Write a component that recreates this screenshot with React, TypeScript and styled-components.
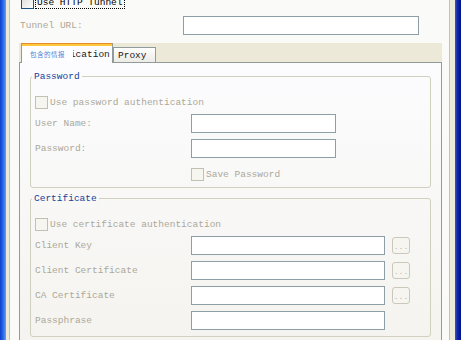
import React from 'react';
import styled, {createGlobalStyle} from 'styled-components';

const GlobalStyle = createGlobalStyle`
    html, body {
        margin: 0;
        padding: 0;
        background: #ECE9D8;
    }
    body {
        font-family: "Liberation Mono", "Noto Sans CJK SC", monospace;
        font-size: 9.5px;
        color: #000;
    }
`

const Window = styled.div`
    width: 461px;
    height: 340px;
    display: flex;
    overflow: hidden;
    background: #ECE9D8;
`

const FrameSide = styled.div<{ $side: 'left' | 'right' }>`
    flex: none;
    width: 6px;
    background: ${p => p.$side === 'left'
        ? 'linear-gradient(to right, #0B3CCB, #2C6DE8 55%, #6A9BEF)'
        : 'linear-gradient(to right, #3A52C8, #0D23A6 45%, #00128E)'};
`

const Client = styled.div`
    flex: 1;
    min-width: 0;
    display: flex;
    padding: 0 5px 0 3px;
`

const Body = styled.div`
    flex: 1;
    min-width: 0;
    display: flex;
    flex-direction: column;
    background: #FAFAF8;
    border-left: 1px solid #C4C2B4;
    border-right: 1px solid #C4C2B4;
    padding: 0 7px 0 9px;
`

const TopRow = styled.div`
    margin-top: -4px;
    height: 13px;
    display: flex;
    align-items: center;
    padding-left: 2px;
`

const Check = styled.span<{ $disabled?: boolean }>`
    flex: none;
    width: 13px;
    height: 13px;
    box-sizing: border-box;
    border: 1px solid ${p => p.$disabled ? '#C2C0B3' : '#1C5180'};
    background: ${p => p.$disabled
        ? '#F6F5EF'
        : 'linear-gradient(135deg, #DCDCD7, #FFFFFF)'};
`

const FocusText = styled.span`
    margin-left: 1px;
    padding: 0 1px;
    border: 1px dotted #000;
    line-height: 11px;
    white-space: nowrap;
`

const UrlRow = styled.div`
    margin-top: 7px;
    height: 19px;
    display: flex;
    align-items: center;
    padding-left: 1px;
`

const Label = styled.span<{ $w: number }>`
    flex: none;
    width: ${p => p.$w}px;
    color: #ACA899;
    white-space: nowrap;
`

const TextBox = styled.div<{ $w: number }>`
    flex: none;
    width: ${p => p.$w}px;
    height: 19px;
    box-sizing: border-box;
    border: 1px solid #8E9EA6;
    background: #FFFFFF;
`

const TabControl = styled.div`
    margin-top: 8px;
    flex: 1;
    min-height: 0;
    display: flex;
    flex-direction: column;
`

const TabStrip = styled.div`
    height: 19px;
    flex: none;
    display: flex;
    align-items: flex-end;
    padding-left: 2px;
    background: #ECE9D8;
    position: relative;
    z-index: 1;
`

const Tab = styled.div<{ $active?: boolean; $w: number }>`
    position: relative;
    box-sizing: border-box;
    width: ${p => p.$w}px;
    height: ${p => p.$active ? 20 : 15}px;
    margin-bottom: ${p => p.$active ? -1 : 0}px;
    display: flex;
    align-items: center;
    padding: ${p => p.$active ? '2px 0 0 8px' : '0 0 0 4px'};
    border: 1px solid #919B9C;
    border-bottom: none;
    border-top: 1px solid ${p => p.$active ? '#E68B2C' : '#919B9C'};
    box-shadow: ${p => p.$active ? 'inset 0 2px 0 #FFC73C' : 'none'};
    background: ${p => p.$active
        ? '#FCFCFE'
        : 'linear-gradient(#FFFFFF, #ECEBE6)'};
    color: #1A1A1A;
    white-space: nowrap;
`

// IME candidate hint that sits over the first tab's caption
const ImeHint = styled.span`
    position: absolute;
    left: 1px;
    top: 2px;
    width: 50px;
    height: 15px;
    box-sizing: border-box;
    padding-left: 7px;
    display: flex;
    align-items: center;
    background: #FFFFFF;
    color: #4A82D8;
    font-family: "Noto Sans CJK SC", sans-serif;
    font-size: 6.5px;
    letter-spacing: 0.5px;
`

const Panel = styled.div`
    flex: 1;
    border: 1px solid #919B9C;
    background: linear-gradient(#FCFCFE, #F4F3EE);
    padding: 8px 10px 20px 10px;
    display: flex;
    flex-direction: column;
`

const GroupBox = styled.fieldset<{ $top?: number }>`
    margin: ${p => p.$top ?? 0}px 0 0 0;
    min-width: 0;
    border: 1px solid #D0D0BF;
    border-radius: 3px;
    padding: 14px 4px 6px 4px;
    display: flex;
    flex-direction: column;
`

const GroupTitle = styled.legend`
    margin-left: -3px;
    padding: 0 2px;
    line-height: 11px;
    color: #21409A;
`

const CheckRow = styled.div<{ $top?: number; $indent?: number }>`
    height: 13px;
    margin-top: ${p => p.$top ?? 0}px;
    margin-left: ${p => p.$indent ?? 0}px;
    display: flex;
    align-items: center;
    gap: 2px;
    color: #ACA899;
    white-space: nowrap;
`

const FieldRow = styled.div<{ $top: number }>`
    height: 19px;
    margin-top: ${p => p.$top}px;
    display: flex;
    align-items: center;
`

const BrowseButton = styled.div`
    flex: none;
    width: 18px;
    height: 17px;
    margin-left: 7px;
    box-sizing: border-box;
    border: 1px solid #CAC8BB;
    border-radius: 3px;
    background: #F6F5EF;
    color: #B9B6A6;
    font-size: 8px;
    line-height: 8px;
    display: flex;
    align-items: center;
    justify-content: center;
    padding-top: 3px;
`

const certFields = [
    {label: 'Client Key', browse: true},
    {label: 'Client Certificate', browse: true},
    {label: 'CA Certificate', browse: true},
    {label: 'Passphrase', browse: false},
]

export default function App() {
    return (
        <>
            <GlobalStyle/>
            <Window>
                <FrameSide $side="left"/>
                <Client>
                    <Body>
                        <TopRow>
                            <Check/>
                            <FocusText>Use HTTP Tunnel</FocusText>
                        </TopRow>
                        <UrlRow>
                            <Label $w={163}>Tunnel URL:</Label>
                            <TextBox $w={236}/>
                        </UrlRow>
                        <TabControl>
                            <TabStrip>
                                <Tab $active $w={92}>
                                    Authentication
                                    <ImeHint>包含的情报</ImeHint>
                                </Tab>
                                <Tab $w={43}>Proxy</Tab>
                            </TabStrip>
                            <Panel>
                                <GroupBox>
                                    <GroupTitle>Password</GroupTitle>
                                    <CheckRow>
                                        <Check $disabled/>
                                        Use password authentication
                                    </CheckRow>
                                    <FieldRow $top={5}>
                                        <Label $w={156}>User Name:</Label>
                                        <TextBox $w={145}/>
                                    </FieldRow>
                                    <FieldRow $top={6}>
                                        <Label $w={156}>Password:</Label>
                                        <TextBox $w={145}/>
                                    </FieldRow>
                                    <CheckRow $top={10} $indent={156}>
                                        <Check $disabled/>
                                        Save Password
                                    </CheckRow>
                                </GroupBox>
                                <GroupBox $top={5}>
                                    <GroupTitle>Certificate</GroupTitle>
                                    <CheckRow>
                                        <Check $disabled/>
                                        Use certificate authentication
                                    </CheckRow>
                                    {certFields.map((f, i) => (
                                        <FieldRow key={f.label} $top={i === 0 ? 5 : 6}>
                                            <Label $w={156}>{f.label}</Label>
                                            <TextBox $w={194}/>
                                            {f.browse && <BrowseButton>...</BrowseButton>}
                                        </FieldRow>
                                    ))}
                                </GroupBox>
                            </Panel>
                        </TabControl>
                    </Body>
                </Client>
                <FrameSide $side="right"/>
            </Window>
        </>
    );
}
